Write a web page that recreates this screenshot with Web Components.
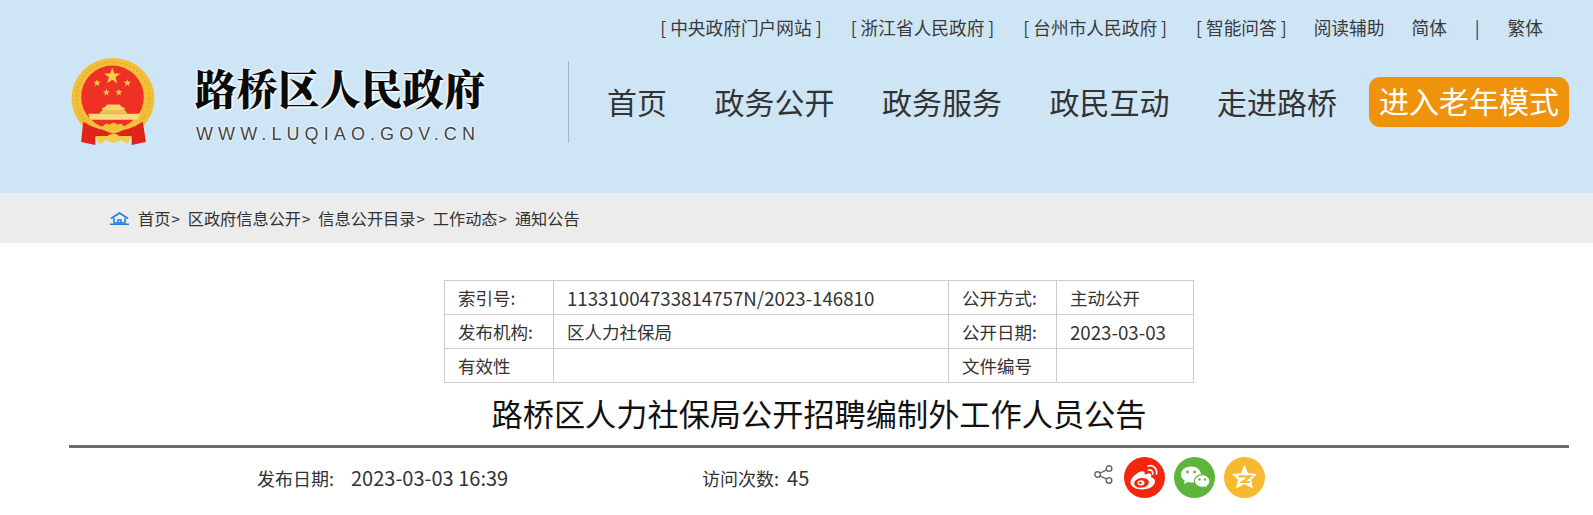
<!DOCTYPE html>
<html lang="zh-CN"><head><meta charset="utf-8"><title>路桥区人民政府</title>
<style>
html,body{margin:0;padding:0;background:#fff;overflow:hidden}
body{width:1593px;height:515px;font-family:"Noto Sans CJK SC","Liberation Sans",sans-serif;color:#333}
gov-header,gov-crumbs,info-table,article-head{display:block}
</style></head><body>
<gov-header></gov-header>
<gov-crumbs></gov-crumbs>
<info-table></info-table>
<article-head></article-head>
<script>
function def(name,html){customElements.define(name,class extends HTMLElement{constructor(){super();this.attachShadow({mode:'open'}).innerHTML=html;}});}
def('gov-emblem',`<style>:host{display:block;width:85px;height:88px;flex:none;margin-top:1px}svg{display:block}</style>
<svg width="85" height="88" viewBox="0 0 84 87">
<defs><polygon id="s" points="0,-1 .235,-.324 .951,-.309 .38,.124 .588,.809 0,.4 -.588,.809 -.38,.124 -.951,-.309 -.235,-.324"/></defs>
<ellipse cx="41.500" cy="40" rx="41" ry="40" fill="#f3bf38"/>
<ellipse cx="41.500" cy="39.500" rx="36" ry="35.500" fill="none" stroke="#e3a825" stroke-width="1.300" stroke-dasharray="2 2.200"/>
<circle cx="41" cy="38.500" r="31" fill="#ee3124"/>
<g fill="#f4cf45">
<use href="#s" transform="translate(40.700 18) scale(8.500)"/>
<use href="#s" transform="translate(25.700 24.700) scale(3.900)"/>
<use href="#s" transform="translate(55.700 24.700) scale(3.900)"/>
<use href="#s" transform="translate(35 34) scale(3.700)"/>
<use href="#s" transform="translate(47.300 34) scale(3.700)"/>
</g>
<path d="M30 50Q34 49 36 46H48Q50 49 54 50L52 51.500H32Z" fill="#f8d26a"/>
<path d="M28 55 31 51.500H53L56 55Z" fill="#efc051"/>
<path d="M17 55H68L66 61H19Z" fill="#f8da7c"/>
<path d="M12 63Q26 72 42 72Q58 72 71 63L74 83 60 86V78H24V86L10 83Z" fill="#de241b"/>
<path d="M30 70Q34 63 38 66 42 62 46 66 50 63 54 70 48 73.500 42 75 36 73.500 30 70Z" fill="#f3c23c"/>
<path d="M24 77H36Q42 73 48 77H60L56 85 49 81Q42 87 35 81L28 85Z" fill="#f6cc48"/>
</svg>`);
def('gov-header',`<style>
:host{display:block;height:193px;background:#cee5f6;box-sizing:border-box;color:#333}
.top{height:58px;box-sizing:border-box;padding:12px 50px 0 0;display:flex;justify-content:flex-end;font-size:17.700px;line-height:30px;white-space:nowrap;color:#3a3a3a}
.top span{margin-left:var(--m,29px)}
.top .bar{color:#16427a;--m:28px}
.main{height:87px;display:flex;align-items:center;padding-left:71px}
.brand{margin-left:39px;width:288px;flex:none;align-self:flex-start;padding-top:6px}
.name{font-family:"Noto Serif CJK SC","Noto Sans CJK SC",sans-serif;font-size:41.500px;font-weight:900;line-height:46px;color:#0b0b0b;white-space:nowrap;text-shadow:0 0 3px #fff,0 0 3px #fff,1px 1px 2px #fff}
.url{font:18px/20px "Liberation Sans",sans-serif;letter-spacing:5.100px;color:#444;margin:14px 0 0 1px;white-space:nowrap;text-shadow:0 0 2px #fff,0 0 2px #fff}
.sep{width:1px;height:82px;background:#a9b4bc;margin-left:85px;flex:none}
nav{display:flex;gap:47.500px;margin:-2px 0 0 38px;font-size:30px;line-height:44px;color:#333;white-space:nowrap}
.old{margin-left:32px;width:200px;height:50px;box-sizing:border-box;background:#ee930b;border-radius:11px;color:#fff;font-size:30px;line-height:47px;text-align:center;white-space:nowrap}
</style>
<div class="top"><span>[ 中央政府门户网站 ]</span><span>[ 浙江省人民政府 ]</span><span>[ 台州市人民政府 ]</span><span>[ 智能问答 ]</span><span style="--m:27px">阅读辅助</span><span style="--m:27px">简体</span><span class="bar">|</span><span style="--m:28px">繁体</span></div>
<div class="main"><gov-emblem></gov-emblem>
<div class="brand"><div class="name">路桥区人民政府</div><div class="url">WWW.LUQIAO.GOV.CN</div></div>
<div class="sep"></div>
<nav><span>首页</span><span>政务公开</span><span>政务服务</span><span>政民互动</span><span>走进路桥</span></nav>
<div class="old">进入老年模式</div></div>`);
def('gov-crumbs',`<style>
:host{display:block;height:50px;background:#ececec;margin-top:0}
.row{height:50px;display:flex;align-items:center;padding-left:110px;font-size:16.200px;color:#333;white-space:nowrap}
svg{margin-right:9px;flex:none}
span{margin-right:8px}
i{font-style:normal;font-size:15px;margin-left:1px}
</style>
<div class="row">
<svg width="19" height="13" viewBox="0 0 19 13" fill="none" stroke="#1f7fd6" stroke-width="1.500"><path d="M1 6.500 9.500 1 18 6.500"/><path d="M4 6v5h11V6"/><path d="M8 11V8h3v3"/><path d="M0 12.300h19"/></svg>
<span>首页<i>&gt;</i></span><span>区政府信息公开<i>&gt;</i></span><span>信息公开目录<i>&gt;</i></span><span>工作动态<i>&gt;</i></span><span>通知公告</span></div>`);
def('info-table',`<style>
:host{display:block;padding-top:37px}
table{border-collapse:collapse;table-layout:fixed;width:749px;margin-left:444px;font-size:17.500px;color:#333}
td{border:1px solid #ccc;height:33px;padding:0 0 0 13px;line-height:33px;box-sizing:border-box;white-space:nowrap;overflow:hidden}
.n{font-size:18.700px}
</style>
<table><colgroup><col style="width:109px"><col style="width:395px"><col style="width:108px"><col style="width:137px"></colgroup>
<tr><td>索引号:</td><td class="n">11331004733814757N/2023-146810</td><td>公开方式:</td><td>主动公开</td></tr>
<tr><td>发布机构:</td><td>区人力社保局</td><td>公开日期:</td><td class="n">2023-03-03</td></tr>
<tr><td>有效性</td><td></td><td>文件编号</td><td></td></tr></table>`);
def('article-head',`<style>
:host{display:block;margin:0 24px 0 69px;color:#333}
h1{margin:0;font-size:31.200px;font-weight:400;line-height:60px;height:62px;text-align:center;color:#111;white-space:nowrap}
.rule{height:3px;background:#6e6e6e}
.meta{display:flex;align-items:center;height:58px;font-size:18px;white-space:nowrap;padding-left:188px}
.a{width:445px}.b{width:392px}
.d{font-size:20px}
.a .d{margin-left:17px}
.b .d{margin-left:4px}
.icons{display:flex;align-items:center;gap:9px}
.icons svg{display:block}
.share{margin:0 2px 6px 0}
</style>
<h1>路桥区人力社保局公开招聘编制外工作人员公告</h1>
<div class="rule"></div>
<div class="meta"><span class="a">发布日期:<span class="d">2023-03-03 16:39</span></span><span class="b">访问次数: <span class="d">45</span></span>
<div class="icons">
<svg class="share" width="19" height="19" viewBox="0 0 19 19" fill="none" stroke="#666" stroke-width="1.400"><circle cx="3.600" cy="9.500" r="2.800"/><circle cx="15" cy="3.600" r="2.800"/><circle cx="15" cy="15.400" r="2.800"/><path d="M6 8.200 12.600 4.900M6 10.800 12.600 14.100"/></svg>
<svg width="41" height="41" viewBox="0 0 41 41"><circle cx="20.500" cy="20.500" r="20.500" fill="#f4260e"/>
<path d="M17 14.500C11.500 16.500 6.500 21 6.500 25.500c0 4.200 5.600 7 11.700 7 7 0 12.800-3.600 12.800-8 0-2.800-2.500-3.800-4-4.200.8-2 .3-3.300-.9-3.700-1.700-.5-4.100.4-5.600 1.100 1-2.700-.5-4-3.500-3.200Z" fill="#fff"/>
<ellipse cx="17.500" cy="25.800" rx="7.500" ry="4.800" fill="#f4260e" transform="rotate(-8 17.500 25.800)"/><ellipse cx="17" cy="25.800" rx="3.500" ry="2.600" fill="#fff"/><circle cx="16.200" cy="26" r="1.300" fill="#f4260e"/>
<path d="M24 9c5-1.500 9.500 2.500 8.500 8M24.500 13c2.800-.6 4.800 1.400 4.200 4" fill="none" stroke="#fff" stroke-width="1.700" stroke-linecap="round"/></svg>
<svg width="41" height="41" viewBox="0 0 41 41"><circle cx="20.500" cy="20.500" r="20.500" fill="#5fb43c"/>
<path d="M17 9.500C11.500 9.500 7 13 7 17.500c0 2.600 1.500 4.800 3.800 6.300L10 27l3.500-1.900c1.200.3 2.300.5 3.500.5 5.500 0 10-3.600 10-8.100S22.500 9.500 17 9.500Z" fill="#fff"/>
<path d="M36 24c0-3.500-3.500-6.400-7.800-6.400-4.300 0-7.800 2.900-7.800 6.400s3.500 6.400 7.800 6.400c1 0 1.900-.1 2.800-.4l2.800 1.500-.7-2.500C35 27.800 36 26 36 24Z" fill="#fff" stroke="#5fb43c" stroke-width="1.200"/>
<g fill="#5fb43c"><circle cx="13.500" cy="15" r="1.400"/><circle cx="20.500" cy="15" r="1.400"/><circle cx="25.500" cy="22.500" r="1.200"/><circle cx="31" cy="22.500" r="1.200"/></g></svg>
<svg width="41" height="41" viewBox="0 0 41 41"><circle cx="20.500" cy="20.500" r="20.500" fill="#f7b92f"/>
<path d="M20.500 8 24 16.300 33 17.100 27 22.700 29 31.500 20.500 27 12 31.500 14 22.700 8 17.100 17 16.300Z" fill="#fff"/>
<path d="M14.500 19.300H26.500L18.500 25H26" fill="none" stroke="#f7b92f" stroke-width="2.200"/></svg>
</div></div>`);
</script></body></html>
